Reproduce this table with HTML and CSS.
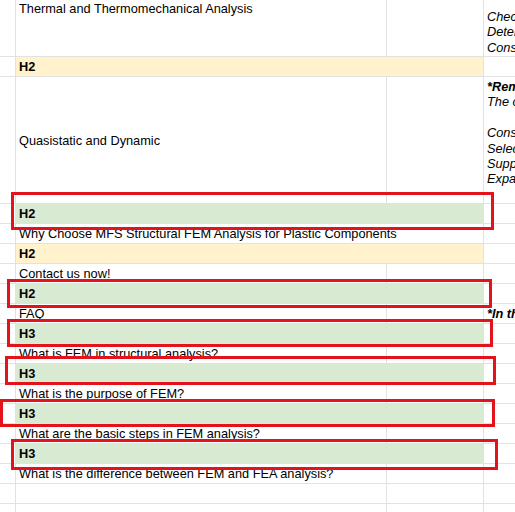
FILE: index.html
```html
<!DOCTYPE html>
<html lang="en">
<head>
<meta charset="utf-8">
<title>Sheet</title>
<link rel="stylesheet" href="styles.css">
</head>
<body>
<div class="sheet">
  <div class="row row-first">
    <div class="cell col-a"></div>
    <div class="cell col-b align-top">Thermal and Thermomechanical Analysis</div>
    <div class="cell col-c"></div>
    <div class="cell col-d notes align-bottom">
      <span>Check the thermal load cases</span>
      <span>Determine temperature fields</span>
      <span>Consider thermal expansion</span>
    </div>
  </div>
  <div class="row">
    <div class="cell col-a"></div>
    <div class="cell col-bc fill-yellow"><b>H2</b></div>
    <div class="cell col-d"></div>
  </div>
  <div class="row row-big">
    <div class="cell col-a"></div>
    <div class="cell col-b align-middle">Quasistatic and Dynamic</div>
    <div class="cell col-c"></div>
    <div class="cell col-d notes align-top">
      <span class="strong">*Remark</span>
      <span>The customer should</span>
      <span>&nbsp;</span>
      <span>Consider loads</span>
      <span>Select materials</span>
      <span>Supports and contacts</span>
      <span>Expand the model</span>
    </div>
  </div>
  <div class="row">
    <div class="cell col-a"></div>
    <div class="cell col-bc fill-green"><b>H2</b></div>
    <div class="cell col-d"></div>
  </div>
  <div class="row">
    <div class="cell col-a"></div>
    <div class="cell col-bc">Why Choose MFS Structural FEM Analysis for Plastic Components</div>
    <div class="cell col-d"></div>
  </div>
  <div class="row">
    <div class="cell col-a"></div>
    <div class="cell col-bc fill-yellow"><b>H2</b></div>
    <div class="cell col-d"></div>
  </div>
  <div class="row">
    <div class="cell col-a"></div>
    <div class="cell col-b">Contact us now!</div>
    <div class="cell col-c"></div>
    <div class="cell col-d"></div>
  </div>
  <div class="row">
    <div class="cell col-a"></div>
    <div class="cell col-bc fill-green"><b>H2</b></div>
    <div class="cell col-d"></div>
  </div>
  <div class="row">
    <div class="cell col-a"></div>
    <div class="cell col-b">FAQ</div>
    <div class="cell col-c"></div>
    <div class="cell col-d notes"><span class="strong">*In this section</span></div>
  </div>
  <div class="row">
    <div class="cell col-a"></div>
    <div class="cell col-bc fill-green"><b>H3</b></div>
    <div class="cell col-d"></div>
  </div>
  <div class="row">
    <div class="cell col-a"></div>
    <div class="cell col-b">What is FEM in structural analysis?</div>
    <div class="cell col-c"></div>
    <div class="cell col-d"></div>
  </div>
  <div class="row">
    <div class="cell col-a"></div>
    <div class="cell col-bc fill-green"><b>H3</b></div>
    <div class="cell col-d"></div>
  </div>
  <div class="row">
    <div class="cell col-a"></div>
    <div class="cell col-b">What is the purpose of FEM?</div>
    <div class="cell col-c"></div>
    <div class="cell col-d"></div>
  </div>
  <div class="row">
    <div class="cell col-a"></div>
    <div class="cell col-bc fill-green"><b>H3</b></div>
    <div class="cell col-d"></div>
  </div>
  <div class="row">
    <div class="cell col-a"></div>
    <div class="cell col-b">What are the basic steps in FEM analysis?</div>
    <div class="cell col-c"></div>
    <div class="cell col-d"></div>
  </div>
  <div class="row">
    <div class="cell col-a"></div>
    <div class="cell col-bc fill-green"><b>H3</b></div>
    <div class="cell col-d"></div>
  </div>
  <div class="row">
    <div class="cell col-a"></div>
    <div class="cell col-b">What is the difference between FEM and FEA analysis?</div>
    <div class="cell col-c"></div>
    <div class="cell col-d"></div>
  </div>
  <div class="row">
    <div class="cell col-a"></div>
    <div class="cell col-b"></div>
    <div class="cell col-c"></div>
    <div class="cell col-d"></div>
  </div>
  <div class="row">
    <div class="cell col-a"></div>
    <div class="cell col-b"></div>
    <div class="cell col-c"></div>
    <div class="cell col-d"></div>
  </div>

  <div class="mark mark-1"></div>
  <div class="mark mark-2"></div>
  <div class="mark mark-3"></div>
  <div class="mark mark-4"></div>
  <div class="mark mark-5"></div>
  <div class="mark mark-6"></div>
</div>
</body>
</html>
```
FILE: styles.css
```css
html, body {
  margin: 0;
  padding: 0;
  background: #ffffff;
  overflow: hidden;
}

.sheet {
  position: relative;
  width: 515px;
  height: 512px;
  overflow: hidden;
  font-family: "Liberation Sans", Arial, sans-serif;
  font-size: 12.75px;
  color: #000000;
}

.row {
  display: grid;
  grid-template-columns: 16px 371px 97px 1fr;
  height: 20px;
  box-sizing: border-box;
  border-bottom: 1px solid #e2e2e2;
}

.row-first {
  height: 57px;
}

.row-big {
  height: 127px;
}

.cell {
  box-sizing: border-box;
  border-right: 1px solid #e2e2e2;
  display: flex;
  flex-direction: column;
  justify-content: flex-end;
  padding: 0 3px 2px 3px;
  line-height: 15px;
  white-space: nowrap;
  overflow: hidden;
  min-width: 0;
}

.col-a {
  padding: 0;
}

.col-bc {
  grid-column: 2 / span 2;
  overflow: visible;
}

.col-d {
  border-right: none;
}

.align-top {
  justify-content: flex-start;
  padding-top: 1px;
}

.align-middle {
  justify-content: center;
  padding-bottom: 0;
}

.align-bottom {
  justify-content: flex-end;
  padding-bottom: 1px;
}

.notes {
  font-style: italic;
  line-height: 15.4px;
}

.notes.align-top {
  padding-top: 2px;
}

.notes span {
  display: block;
}

.notes .strong {
  font-weight: bold;
}

.fill-yellow {
  background: #fff2cc;
}

.fill-green {
  background: #d9ead3;
}

.mark {
  position: absolute;
  box-sizing: border-box;
  border: 3px solid #e3131b;
}

.mark-1 { left: 11px; top: 192px; width: 483px; height: 38px; }
.mark-2 { left: 7px;  top: 279px; width: 485px; height: 29px; }
.mark-3 { left: 7px;  top: 319px; width: 486px; height: 28px; }
.mark-4 { left: 5px;  top: 356px; width: 491px; height: 29px; }
.mark-5 { left: 0px;  top: 399px; width: 495px; height: 28px; }
.mark-6 { left: 11px; top: 439px; width: 487px; height: 31px; }
```
